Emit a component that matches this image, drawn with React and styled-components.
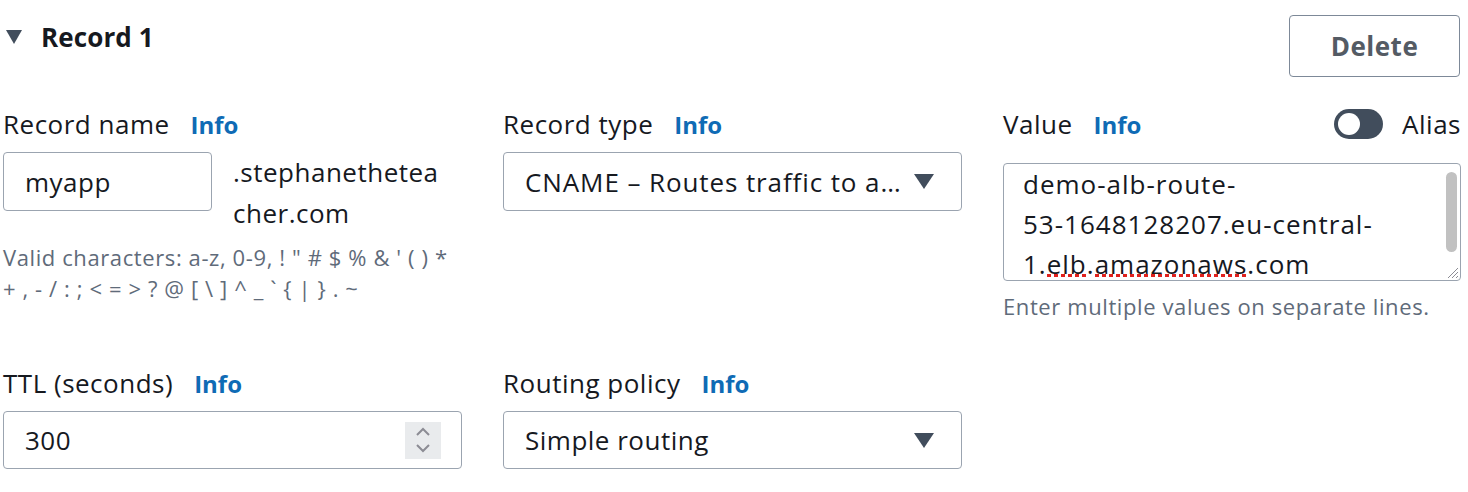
import React from "react";
import styled, { createGlobalStyle } from "styled-components";

const GlobalStyle = createGlobalStyle`
  body {
    margin: 0;
    background: #ffffff;
    font-family: "Open Sans", "Noto Sans", sans-serif;
    color: #16191f;
  }
`;

const Page = styled.div`
  width: 1468px;
  height: 492px;
  padding: 15px 8px 0 3px;
  box-sizing: border-box;
  overflow: hidden;
`;

const Header = styled.div`
  display: flex;
  justify-content: space-between;
  align-items: flex-start;
`;

const Heading = styled.h2`
  display: flex;
  align-items: center;
  gap: 19px;
  margin: 6px 0 0 3px;
  font-size: 26px;
  line-height: 32px;
  font-weight: 700;
  letter-spacing: 0.1px;
`;

const Caret = styled.span`
  width: 0;
  height: 0;
  border-left: 8px solid transparent;
  border-right: 8px solid transparent;
  border-top: 14px solid #414d5c;
`;

const DeleteButton = styled.button`
  width: 171px;
  height: 62px;
  border: 1.5px solid #7d8998;
  border-radius: 4px;
  background: #fff;
  font-family: inherit;
  font-size: 26px;
  font-weight: 700;
  letter-spacing: 0.5px;
  color: #545b64;
`;

const Grid = styled.div`
  display: grid;
  grid-template-columns: 459px 459px 458px;
  column-gap: 41px;
  row-gap: 45px;
  margin-top: 31px;
  font-size: 26px;
  letter-spacing: 0.5px;
`;

const Field = styled.div`
  display: flex;
  flex-direction: column;
`;

const LabelRow = styled.div`
  display: flex;
  align-items: center;
  justify-content: space-between;
  height: 32px;
  margin-bottom: ${(p) => p.$gap || 12}px;
`;

const Label = styled.div`
  display: flex;
  align-items: baseline;
  gap: 21px;
  line-height: 32px;
  white-space: nowrap;
`;

const Info = styled.span`
  color: #0f6bb5;
  font-weight: 700;
  font-size: 24px;
  letter-spacing: 0;
`;

const InputRow = styled.div`
  display: flex;
  gap: 21px;
  align-items: flex-start;
`;

const Box = styled.div`
  display: flex;
  align-items: center;
  justify-content: space-between;
  box-sizing: border-box;
  width: ${(p) => p.$w || "100%"};
  height: ${(p) => p.$h || 59}px;
  padding: 0 20px 0 21px;
  border: 1.5px solid #9ba4b0;
  border-radius: 4px;
  white-space: nowrap;
  flex-shrink: 0;
  letter-spacing: ${(p) => p.$ls || 0.5}px;
`;

const Suffix = styled.div`
  max-width: 212px;
  line-height: 41px;
  word-break: break-all;
`;

const Help = styled.div`
  margin-top: ${(p) => p.$top || 8}px;
  font-size: 22px;
  line-height: 31px;
  letter-spacing: 0.6px;
  color: #5f6b7a;
`;

const SelectArrow = styled.span`
  width: 0;
  height: 0;
  margin-right: 7px;
  border-left: 10px solid transparent;
  border-right: 10px solid transparent;
  border-top: 15px solid #414d5c;
`;

const Toggle = styled.div`
  display: flex;
  align-items: center;
  gap: 19px;
`;

const Track = styled.span`
  display: flex;
  align-items: center;
  width: 49px;
  height: 30px;
  border-radius: 15px;
  background: #414d5c;
  padding: 4px;
  box-sizing: border-box;
`;

const Knob = styled.span`
  width: 22px;
  height: 22px;
  border-radius: 50%;
  background: #fff;
`;

const TextArea = styled.div`
  position: relative;
  box-sizing: border-box;
  height: 118px;
  padding: 0 30px 0 19px;
  border: 1.5px solid #9ba4b0;
  border-radius: 4px;
  line-height: 40px;
  letter-spacing: 1px;
  overflow: hidden;
`;

const Spell = styled.span`
  background-image: repeating-linear-gradient(90deg, #e0211d 0 4px, transparent 4px 7px);
  background-size: 100% 3px;
  background-repeat: no-repeat;
  background-position: 0 calc(100% - 5px);
`;

const ScrollThumb = styled.span`
  position: absolute;
  right: 3px;
  top: 8px;
  width: 11px;
  height: 80px;
  border-radius: 6px;
  background: #c1c1c1;
`;

const Grip = styled.svg`
  position: absolute;
  right: 1px;
  bottom: 1px;
`;

const Spinner = styled.span`
  display: flex;
  align-items: center;
  justify-content: center;
  width: 36px;
  height: 37px;
  background: #e9ebed;
`;

export default function App() {
  return (
    <Page>
      <GlobalStyle />
      <Header>
        <Heading>
          <Caret />
          Record 1
        </Heading>
        <DeleteButton>Delete</DeleteButton>
      </Header>
      <Grid>
        <Field>
          <LabelRow>
            <Label>
              Record name<Info>Info</Info>
            </Label>
          </LabelRow>
          <InputRow>
            <Box $w="209px">myapp</Box>
            <Suffix>.stephanetheteacher.com</Suffix>
          </InputRow>
          <Help>
            Valid characters: a-z, 0-9, ! " # $ % &amp; ' ( ) *<br />+ , - / : ; &lt; = &gt; ? @ [ \ ] ^ _ ` {"{"} | {"}"} . ~
          </Help>
        </Field>
        <Field>
          <LabelRow>
            <Label>
              Record type<Info>Info</Info>
            </Label>
          </LabelRow>
          <Box $ls={0.9}>
            CNAME – Routes traffic to a…
            <SelectArrow />
          </Box>
        </Field>
        <Field>
          <LabelRow $gap={23}>
            <Label>
              Value<Info>Info</Info>
            </Label>
            <Toggle>
              <Track>
                <Knob />
              </Track>
              Alias
            </Toggle>
          </LabelRow>
          <TextArea>
            demo-alb-route-
            <br />
            53-1648128207.eu-central-
            <br />
            1.<Spell>elb</Spell>.<Spell>amazonaws</Spell>.com
            <ScrollThumb />
            <Grip width="14" height="14" viewBox="0 0 14 14">
              <path d="M13 3 L3 13 M13 7 L7 13 M13 11 L11 13" stroke="#8c8c94" strokeWidth="1" />
            </Grip>
          </TextArea>
          <Help $top={10}>Enter multiple values on separate lines.</Help>
        </Field>
        <Field>
          <LabelRow>
            <Label>
              TTL (seconds)<Info>Info</Info>
            </Label>
          </LabelRow>
          <Box $h={58}>
            300
            <Spinner>
              <svg width="18" height="28" viewBox="0 0 18 28">
                <path d="M3 9 L9 3 L15 9 M3 19 L9 25 L15 19" fill="none" stroke="#8c8c94" strokeWidth="2" />
              </svg>
            </Spinner>
          </Box>
        </Field>
        <Field>
          <LabelRow>
            <Label>
              Routing policy<Info>Info</Info>
            </Label>
          </LabelRow>
          <Box $h={58}>
            Simple routing
            <SelectArrow />
          </Box>
        </Field>
      </Grid>
    </Page>
  );
}
